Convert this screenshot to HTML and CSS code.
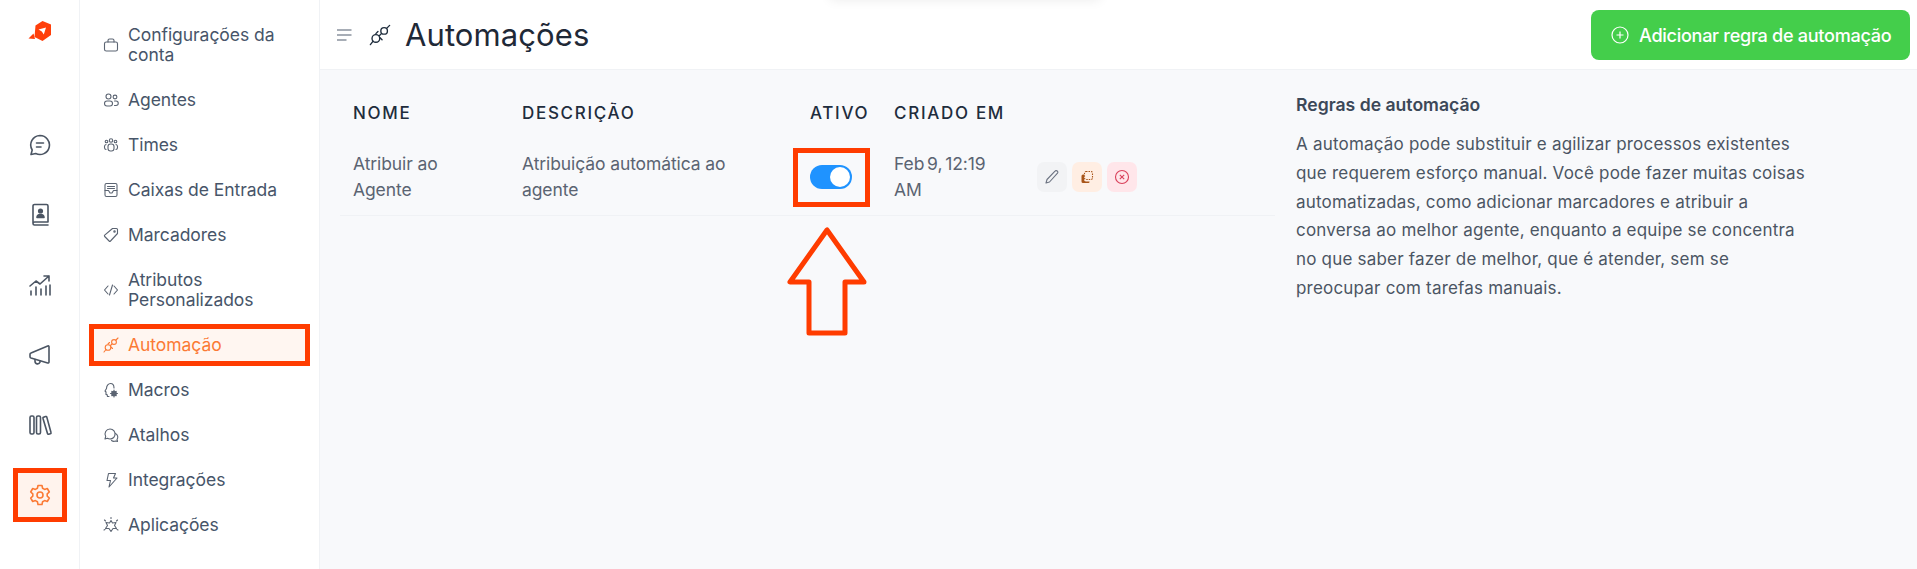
FILE: index.html
```html
<!DOCTYPE html>
<html lang="pt-BR">
<head>
  <meta charset="UTF-8">
  <meta name="viewport" content="width=device-width, initial-scale=1.0">
  <title>Automações</title>
  <link rel="stylesheet" href="styles.css">
</head>
<body>
  <div class="app">
    <nav class="rail">
      <div class="rail-logo">
        <svg width="24" height="22" viewBox="0 0 24 22"><path d="M7.500 5.500 14.500 1 23 4.500V15L14.500 21 6.500 17Z" fill="#ff3f0a"/><path d="M.5 18.500 5.500 13.500 7 19Z" fill="#ff3f0a"/><path d="M10.500 9.500 18 7.500 15.800 14.500 13.800 11.500Z" fill="#fff"/></svg>
      </div>
      <div class="rail-items">
        <a class="rail-btn"><svg width="22" height="22" viewBox="0 0 22 22" class="ico"><path d="M11 1.500a9.500 9.500 0 1 1-4.300 18L2 20.500l1.200-4.500A9.500 9.500 0 0 1 11 1.500Z"/><path d="M7.500 9h7M7.500 13h4.500"/></svg></a>
        <a class="rail-btn"><svg width="22" height="24" viewBox="0 0 22 24" class="ico"><path d="M4 20V3a1.500 1.500 0 0 1 1.500-1.500h12A1.500 1.500 0 0 1 19 3v16H5.500A1.500 1.500 0 0 0 4 20.500 1.500 1.500 0 0 0 5.500 22H19"/><circle cx="11.500" cy="8" r="1.800" fill="#4b5563"/><path d="M8 14.500c0-4 7-4 7 0Z" fill="#4b5563"/></svg></a>
        <a class="rail-btn"><svg width="24" height="24" viewBox="0 0 24 24" class="ico"><path d="M2 13 8 8l4 3 9-8M16 3h5v5"/><path d="M3 22v-4M8 22v-8M13 22v-6M18 22v-9M22 22v-10"/></svg></a>
        <a class="rail-btn"><svg width="24" height="22" viewBox="0 0 24 22" class="ico"><path d="M21 2.500v15.500a1 1 0 0 1-1.300 1L3 14a1.500 1.500 0 0 1-1-1.500v-2a1.500 1.500 0 0 1 1-1.500L19.700 2a1 1 0 0 1 1.300.500Z"/><path d="M7 15.500v1.800a2.600 2.600 0 0 0 5 1v-1.300"/></svg></a>
        <a class="rail-btn"><svg width="24" height="24" viewBox="0 0 24 24" class="ico"><rect x="2" y="3" width="4" height="18" rx="1.500"/><rect x="8.500" y="3" width="4" height="18" rx="1.500"/><path d="M15 4.500 17.500 3.500a1 1 0 0 1 1.300.600L23 19.500a1 1 0 0 1-.700 1.300l-1.600.400a1 1 0 0 1-1.200-.700L15 5.500"/></svg></a>
        <a class="rail-btn active mark"><svg width="22" height="22" viewBox="0 0 22 22" class="ico"><path d="M9 1.500h4l.6 2.800 2 1.100 2.700-.9 2 3.500-2.100 1.900v2.200l2.100 1.900-2 3.500-2.700-.9-2 1.100-.6 2.800H9l-.6-2.800-2-1.100-2.700.9-2-3.500 2.100-1.900V9.900L1.700 8l2-3.500 2.700.9 2-1.100Z"/><circle cx="11" cy="11" r="3"/></svg></a>
      </div>
    </nav>

    <aside class="side">
      <a class="side-item"><svg width="16" height="16" viewBox="0 0 16 16" class="ico-s"><rect x="1.500" y="5" width="13" height="9" rx="1.800"/><path d="M5 5V3.500A1.500 1.500 0 0 1 6.500 2h3A1.500 1.500 0 0 1 11 3.500V5"/></svg><span>Configurações da conta</span></a>
      <a class="side-item"><svg width="16" height="16" viewBox="0 0 16 16" class="ico-s"><circle cx="5.500" cy="4.500" r="2.500"/><circle cx="12" cy="5" r="1.900"/><rect x="1.500" y="9" width="8" height="5" rx="2.500"/><path d="M11.500 9h1.500a2 2 0 0 1 0 4.500h-1.500"/></svg><span>Agentes</span></a>
      <a class="side-item"><svg width="16" height="16" viewBox="0 0 16 16" class="ico-s"><circle cx="8" cy="3.500" r="1.700"/><circle cx="3.500" cy="4.500" r="1.300"/><circle cx="12.500" cy="4.500" r="1.300"/><rect x="5" y="7" width="6" height="7" rx="2.500"/><path d="M3 7.500a2 2 0 0 0-1.500 2v1A2 2 0 0 0 3 12.500M13 7.500a2 2 0 0 1 1.500 2v1a2 2 0 0 1-1.500 2"/></svg><span>Times</span></a>
      <a class="side-item"><svg width="16" height="16" viewBox="0 0 16 16" class="ico-s"><rect x="2" y="1.500" width="12" height="13" rx="1.500"/><path d="M2 8.500h3.500l1.500 2.500h2l1.500-2.500H14M4.500 4.500h7M4.500 6.500h7"/></svg><span>Caixas de Entrada</span></a>
      <a class="side-item"><svg width="16" height="16" viewBox="0 0 16 16" class="ico-s"><path d="M9.500 1.500h4a1 1 0 0 1 1 1v4L7.500 14a1 1 0 0 1-1.400 0L1.700 9.500a1 1 0 0 1 0-1.400Z"/><circle cx="11.500" cy="4.500" r=".7"/></svg><span>Marcadores</span></a>
      <a class="side-item"><svg width="16" height="16" viewBox="0 0 16 16" class="ico-s"><path d="M5 4 1.500 8 5 12M11 4l3.500 4L11 12M9.500 3l-3 10"/></svg><span>Atributos Personalizados</span></a>
      <a class="side-item current mark"><svg width="16" height="16" viewBox="0 0 16 16" class="ico-s"><circle cx="5" cy="10.500" r="2.800"/><circle cx="11" cy="5" r="2.400"/><path d="M1 15l2-2.500M13 3l2-2M7.500 8.500 9 7M5 7l1.500-1.500M9.500 11.500 8 10"/></svg><span>Automação</span></a>
      <a class="side-item"><svg width="16" height="16" viewBox="0 0 16 16" class="ico-s"><path d="M6 14.500H4.500L4 12.500H3V10L2 9l1.500-2.500C3.500 3.500 5.500 1.500 7.500 1.500S11 3 11 6"/><circle cx="11" cy="11.500" r="2.300" fill="#475569"/><path d="M11 8v7M7.500 11.500h7M8.800 9.300l4.400 4.400M13.200 9.300l-4.400 4.400"/></svg><span>Macros</span></a>
      <a class="side-item"><svg width="16" height="16" viewBox="0 0 16 16" class="ico-s"><path d="M7 2a5 5 0 1 1-2.500 9.300L2 12l.7-2.500A5 5 0 0 1 7 2Z"/><path d="M12.500 6.500a4 4 0 0 1 1.500 6l.5 2-2-.5a4 4 0 0 1-4-.5"/></svg><span>Atalhos</span></a>
      <a class="side-item"><svg width="16" height="16" viewBox="0 0 16 16" class="ico-s"><path d="M5.500 1.500h7L10.500 6h3.500L6 15l1.500-6.500H4Z"/></svg><span>Integrações</span></a>
      <a class="side-item"><svg width="16" height="16" viewBox="0 0 16 16" class="ico-s"><path d="M8 3.500 9.500 6 13 5.500 11.500 8.500 13.500 11.500 10 11.500 8 14.500 6 11.500 2.500 11.500 4.500 8.500 3 5.500 6.500 6Z"/><path d="M8 .5v1M1.500 3l1 1M14.500 3l-1 1M1 13l1-.5M15 13l-1-.5"/></svg><span>Aplicações</span></a>
    </aside>

    <div class="main">
      <header class="top">
        <svg width="15" height="12" viewBox="0 0 15 12" class="burger"><path d="M0 1h14.500M0 6h14.500M0 11h9.500"/></svg>
        <svg width="22" height="22" viewBox="0 0 16 16" class="title-ico"><circle cx="5" cy="10.500" r="2.800"/><circle cx="11" cy="5" r="2.400"/><path d="M1 15l2-2.500M13 3l2-2M7.500 8.500 9 7M5 7l1.500-1.500M9.500 11.500 8 10"/></svg>
        <h1>Automações</h1>
        <button class="add-btn">
          <svg width="18" height="18" viewBox="0 0 18 18"><circle cx="9" cy="9" r="8"/><path d="M9 5.500v7M5.500 9h7"/></svg>
          Adicionar regra de automação
        </button>
      </header>

      <div class="content">
        <table class="rules">
          <thead>
            <tr><th class="c1">Nome</th><th class="c2">Descrição</th><th class="c3">Ativo</th><th class="c4">Criado em</th><th></th></tr>
          </thead>
          <tbody>
            <tr>
              <td>Atribuir ao Agente</td>
              <td>Atribuição automática ao agente</td>
              <td><div class="toggle-box mark"><span class="toggle"></span></div></td>
              <td class="created">Feb 9, 12:19 AM</td>
              <td>
                <div class="actions">
                  <button class="act grey"><svg width="16" height="16" viewBox="0 0 16 16"><path d="M11 2.200a1.600 1.600 0 0 1 2.500 2L5.500 13 2 14l1-3.500Z"/></svg></button>
                  <button class="act peach"><svg width="16" height="16" viewBox="0 0 16 16"><rect x="5.500" y="2.500" width="8" height="8" rx="1.500" stroke-dasharray="1.500 1"/><path d="M2.500 7A1.500 1.500 0 0 1 4 5.500h1v5A2 2 0 0 0 7 12.500h3.500v.5a1 1 0 0 1-1 1H4A1.500 1.500 0 0 1 2.500 12.500Z" fill="#a8551a" stroke="none"/></svg></button>
                  <button class="act pink"><svg width="16" height="16" viewBox="0 0 16 16"><circle cx="8" cy="8" r="6.500"/><path d="m5.800 5.800 4.400 4.400m0-4.400-4.400 4.400"/></svg></button>
                </div>
              </td>
            </tr>
          </tbody>
        </table>

        <section class="help">
          <h2>Regras de automação</h2>
          <p>A automação pode substituir e agilizar processos existentes<br>que requerem esforço manual. Você pode fazer muitas coisas<br>automatizadas, como adicionar marcadores e atribuir a<br>conversa ao melhor agente, enquanto a equipe se concentra<br>no que saber fazer de melhor, que é atender, sem se<br>preocupar com tarefas manuais.</p>
        </section>
      </div>
    </div>
  </div>

  <div class="toast-shadow"></div>
  <svg class="arrow" width="84" height="112" viewBox="0 0 84 112"><path d="M41 4 4 56H23V107H59V56H78Z"/></svg>
</body>
</html>
```

FILE: styles.css
```css
* {
  box-sizing: border-box;
}
html, body {
  margin: 0;
  height: 100%;
  overflow: hidden;
}
body {
  font-family: Inter, "Liberation Sans", sans-serif;
  color: #3c4858;
  background: #fff;
}
.app {
  display: flex;
  height: 569px;
}

/* icon rail */
.rail {
  width: 80px;
  flex: none;
  border-right: 1px solid #f0f2f5;
  display: flex;
  flex-direction: column;
  align-items: center;
}
.rail-logo {
  height: 64px;
  padding-top: 20px;
}
.rail-items {
  margin-top: 59px;
  display: flex;
  flex-direction: column;
  gap: 26px;
}
.rail-btn {
  width: 44px;
  height: 44px;
  display: flex;
  align-items: center;
  justify-content: center;
}
.rail-btn.active {
  background: #fff3ed;
}
.ico {
  fill: none;
  stroke: #4b5563;
  stroke-width: 1.6;
  stroke-linejoin: round;
  stroke-linecap: round;
}
.active .ico {
  stroke: #fb7a35;
}
.mark {
  outline: 5px solid #ff3c00;
}

/* second sidebar */
.side {
  width: 240px;
  flex: none;
  border-right: 1px solid #f0f2f5;
  padding: 19px 14px 0 14px;
  display: flex;
  flex-direction: column;
  gap: 13px;
}
.side-item {
  display: flex;
  align-items: center;
  gap: 9px;
  padding: 6px 0 6px 9px;
  font-size: 17.500px;
  line-height: 20px;
  letter-spacing: -0.05px;
  color: #475569;
}
.ico-s {
  flex: none;
  fill: none;
  stroke: #5b6472;
  stroke-width: 1.100;
  stroke-linejoin: round;
  stroke-linecap: round;
}
.side-item.current {
  background: #fff6f1;
  color: #fb7a35;
}
.current .ico-s {
  stroke: #fb7a35;
}

/* page */
.main {
  flex: 1;
  display: flex;
  flex-direction: column;
  min-width: 0;
}
.top {
  height: 70px;
  flex: none;
  border-bottom: 1px solid #f0f2f5;
  display: flex;
  align-items: center;
  padding: 0 7px 0 17px;
}
.burger {
  fill: none;
  stroke: #8a929e;
  stroke-width: 1.500;
}
.title-ico {
  margin-left: 17px;
  fill: none;
  stroke: #1f2d3d;
  stroke-width: 1;
  stroke-linejoin: round;
  stroke-linecap: round;
}
.top h1 {
  margin: 0 0 0 14px;
  font-size: 31px;
  font-weight: 400;
  letter-spacing: 0.1px;
  color: #1f2937;
}
.add-btn {
  margin-left: auto;
  height: 50px;
  width: 319px;
  border: 0;
  border-radius: 8px;
  background: #44ce4b;
  color: #fff;
  font-family: inherit;
  font-size: 18.100px;
  font-weight: 500;
  letter-spacing: -0.3px;
  display: flex;
  align-items: center;
  gap: 10px;
  padding: 0 0 0 20px;
}
.add-btn svg {
  fill: none;
  stroke: #fff;
  stroke-width: 1.200;
}
.content {
  flex: 1;
  background: #f8f9fb;
  display: flex;
  padding: 19px 0 0 20px;
  align-items: flex-start;
}
.rules {
  width: 935px;
  flex: none;
  table-layout: fixed;
  border-collapse: collapse;
}
.c1 { width: 169px; }
.c2 { width: 287px; }
.c3 { width: 84px; }
.c4 { width: 143px; }
.rules th {
  text-align: left;
  font-size: 17px;
  line-height: 22px;
  font-weight: 500;
  letter-spacing: 1.700px;
  text-transform: uppercase;
  color: #1f2d3d;
  padding: 13px 0 15px 14px;
  white-space: nowrap;
}
.rules td {
  font-size: 17.500px;
  line-height: 26px;
  letter-spacing: -0.1px;
  color: #5b6472;
  padding: 12px 14px 12px 14px;
  border-bottom: 1px solid #f0f2f5;
  vertical-align: middle;
}
.rules th:nth-child(-n+2),
.rules td:nth-child(-n+2) {
  padding-left: 13px;
}
.rules td.created {
  word-spacing: -2px;
}
.toggle-box {
  margin: -12px;
  padding: 12px 13px 13px 12px;
  width: 67px;
}
.toggle {
  display: block;
  width: 42px;
  height: 24px;
  border-radius: 12px;
  background: #1f93ff;
  position: relative;
}
.toggle::after {
  content: "";
  position: absolute;
  top: 2px;
  right: 2px;
  width: 20px;
  height: 20px;
  border-radius: 50%;
  background: #fff;
}
.actions {
  display: flex;
  gap: 5px;
}
.act {
  width: 30px;
  height: 30px;
  border: 0;
  padding: 0;
  border-radius: 7px;
  display: flex;
  align-items: center;
  justify-content: center;
}
.act svg {
  fill: none;
  stroke-width: 1.100;
  stroke-linejoin: round;
}
.grey { background: #f2f3f5; }
.grey svg { stroke: #6b7280; }
.peach { background: #ffeee3; }
.peach svg { stroke: #a8551a; }
.pink { background: #ffe6ea; }
.pink svg { stroke: #d9405a; }

.help {
  margin-left: 21px;
  width: 560px;
}
.help h2 {
  margin: 2px 0 0;
  font-size: 17.600px;
  line-height: 28px;
  font-weight: 600;
  color: #3c4858;
}
.help p {
  margin: 11px 0 0;
  font-size: 17px;
  line-height: 28.800px;
  letter-spacing: 0.2px;
  color: #4b5563;
}

/* annotations drawn over the screenshot */
.arrow {
  position: absolute;
  left: 786px;
  top: 226px;
  fill: none;
  stroke: #ff3c00;
  stroke-width: 5;
  stroke-linejoin: round;
}
.toast-shadow {
  position: absolute;
  left: 830px;
  top: -20px;
  width: 270px;
  height: 20px;
  box-shadow: 0 0 12px rgba(0, 0, 0, 0.08);
}
```
